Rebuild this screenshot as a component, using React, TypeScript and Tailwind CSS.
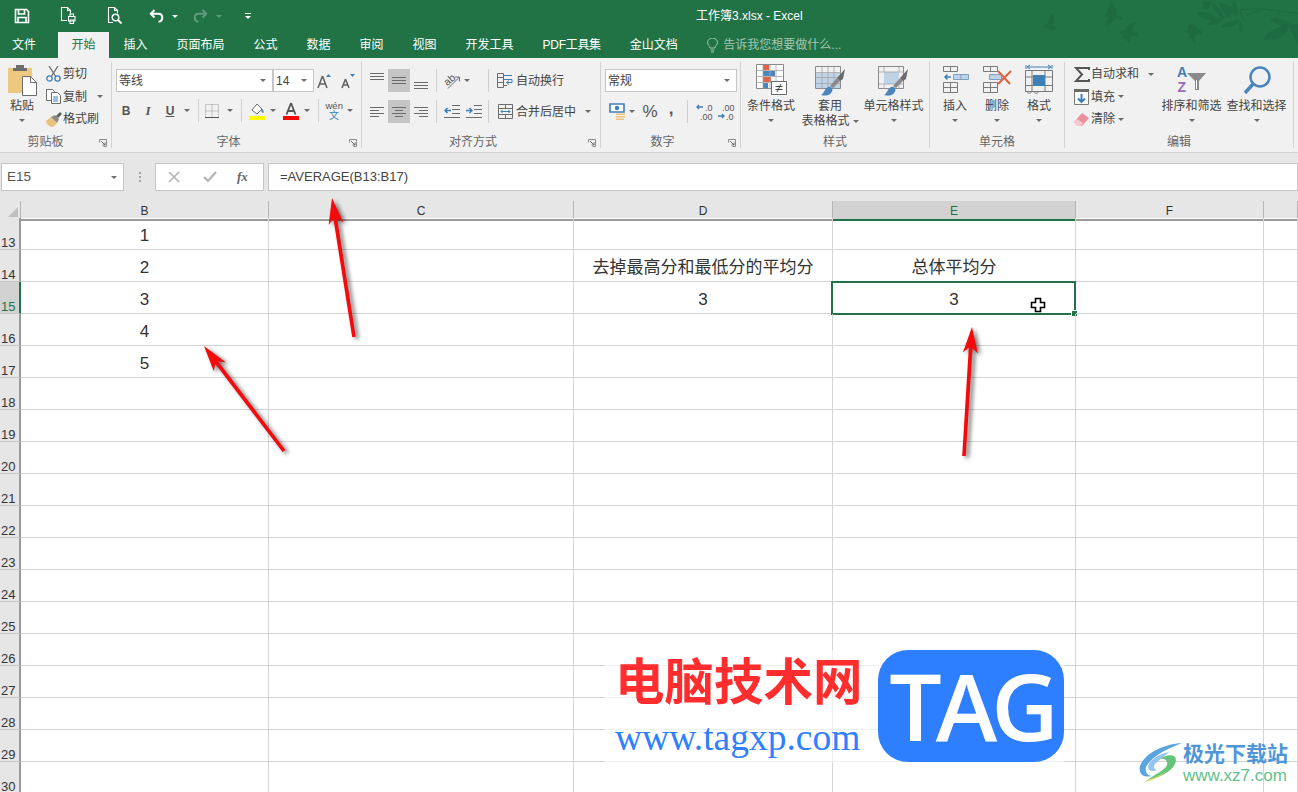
import type { ReactNode } from "react";

const GRAY = "#6b6b6b";
const BLUE = "#3f7fb8";
const RED = "#e0603f";

/* ---------- small bits ---------- */
function Caret({ color = GRAY }: { color?: string }) {
  return (
    <svg width="6" height="3" viewBox="0 0 6 3" className="shrink-0">
      <path d="M0 0h6L3 3z" fill={color} />
    </svg>
  );
}

function Launcher() {
  return (
    <svg width="8" height="8" viewBox="0 0 8 8" className="mr-[4px] shrink-0">
      <path d="M.5 3.5v-3h7v7h-3" fill="none" stroke="#8a8a8a" />
      <path d="M2 2l4 4M6 3.5V6H3.5" fill="none" stroke="#6b6b6b" />
    </svg>
  );
}

function Sep() {
  return <div className="h-[23px] w-px shrink-0 bg-[#cfcfcf]" />;
}

function Slot({ w, active, className = "", children }: { w: string; active?: boolean; className?: string; children?: ReactNode }) {
  return (
    <div className={`flex h-[23px] shrink-0 items-center justify-center ${w} ${active ? "bg-[#c5c5c5]" : ""} ${className}`}>
      {children}
    </div>
  );
}

function Combo({ w, text }: { w: string; text: string }) {
  return (
    <div className={`flex h-[23px] shrink-0 items-center justify-between border border-[#c6c6c6] bg-white pr-[6px] pl-[2px] text-[12px] text-[#444] ${w}`}>
      <span>{text}</span>
      <Caret />
    </div>
  );
}

function Group({ w, label, launcher, labelClass = "", children }: { w: string; label: string; launcher?: boolean; labelClass?: string; children: ReactNode }) {
  return (
    <div className={`flex h-[86px] shrink-0 flex-col border-r border-[#d2d2d2] ${w}`}>
      <div className="h-[71px] shrink-0">{children}</div>
      <div className="mt-[2px] flex h-[15px] shrink-0 items-center text-[12px] leading-[15px] text-[#666]">
        <span className={`flex-1 text-center ${labelClass}`}>{label}</span>
        {launcher && <Launcher />}
      </div>
    </div>
  );
}

function BigButton({ w, icon, lines, inlineCaret }: { w: string; icon: ReactNode; lines: string[]; inlineCaret?: boolean }) {
  return (
    <div className={`flex shrink-0 flex-col items-center text-[12px] leading-[15px] whitespace-nowrap text-[#444] ${w}`}>
      <div className="flex h-[37px] items-end justify-center pb-[3px]">{icon}</div>
      {lines.map((line, i) => (
        <div key={i} className="flex h-[15px] items-center gap-[3px]">
          {line}
          {inlineCaret && i === lines.length - 1 && <Caret />}
        </div>
      ))}
      {!inlineCaret && (
        <div className="flex h-[13px] items-center">
          <Caret />
        </div>
      )}
    </div>
  );
}

function SmallRow({ icon, text, caret }: { icon: ReactNode; text: string; caret?: string }) {
  return (
    <div className="flex h-[22.5px] items-center text-[12px] whitespace-nowrap text-[#444]">
      <div className="flex w-[19px] shrink-0 justify-center">{icon}</div>
      <span>{text}</span>
      {caret && <span className={`flex ${caret}`}><Caret /></span>}
    </div>
  );
}

/* ---------- title bar icons ---------- */
function SaveIcon() {
  return (
    <svg width="16" height="16" viewBox="0 0 16 16" fill="none" stroke="#fff" strokeWidth="1.6">
      <path d="M1.5 1.5h11l2 2v11h-13z" />
      <path d="M4.5 2v4h6V2M4 14.5v-5h8v5" />
    </svg>
  );
}
function PrintIcon() {
  return (
    <svg width="17" height="18" viewBox="0 0 17 18" fill="none" stroke="#fff" strokeWidth="1.1">
      <path d="M7 13.5H1.5v-13h6l3 3v3" />
      <path d="M7.5 .5v3h3" />
      <path d="M8.5 9.5h6.500v4.500H8.500z" fill="#217346" />
      <path d="M10 9.5V7h3.500v2.500M10 13h3.500v3.500H10z" />
    </svg>
  );
}
function PreviewIcon() {
  return (
    <svg width="16" height="18" viewBox="0 0 16 18" fill="none" stroke="#fff" strokeWidth="1.1">
      <path d="M6 15.5H1.5V.5h6l3 3v3" />
      <path d="M7.5 .5v3h3" />
      <circle cx="8.5" cy="10.5" r="3.3" strokeWidth="1.4" />
      <path d="M11 13l3.500 3.500" strokeWidth="1.8" />
    </svg>
  );
}
function UndoIcon({ color }: { color: string }) {
  return (
    <svg width="16" height="14" viewBox="0 0 16 14" fill="none" stroke={color} strokeWidth="2">
      <path d="M5.5 1L1.8 4.800l3.700 3.700" />
      <path d="M2.5 4.800h7c5 0 5 7.500 0 8" />
    </svg>
  );
}

function Decor() {
  return (
    <svg width="258" height="50" viewBox="0 0 774 150" className="absolute top-0 right-0" fill="#1e6a41">
      <path d="M40 40C28 48 25 60 22 72L5 76l17 8 13 6 17-2-4-6-8-4c2-13 4-26 0-38z" />
      <path d="M215 8c-10 7-10 27-20 37l-5 3 15 2-10 28c13-3 27-16 33-23l22 3-5-8-15-2c0-18-5-33-15-40z" />
      <path d="M288 68c-18 2-30 10-33 22l-20 6 15 6-2 10 24 20c-2-12-2-20 3-26l20 4-1-12-17-3c0-10 4-20 11-27z" />
      <path d="M455 70c-10 2-12 12-10 20l-15 5 18 5c2 10 10 25 20 33-6-15-3-23 2-31h16l-2-14-14-3c-2-7-8-13-15-15z" />
      <path d="M600 30c50-8 100 0 174 10M600 30l10 30M665 30l-45 15M720 34l-8 18" fill="none" stroke="#1e6a41" strokeWidth="4" />
      <path d="M467 38c23-6 48 0 63 22-25 2-50-5-63-22zM490 5l25-3c-5 13-10 23-20 28-5-8-7-18-5-25zM515 8c15 7 35 27 35 47-15-10-32-27-35-47zM535 8c25 2 40 12 45 22-5 15-15 20-20 22-10-17-20-32-25-44zM580 0c15 15 17 35 10 48-12-8-18-23-10-48zM500 75c20-20 40-25 55-23-10 16-30 26-55 23zM542 80c18-15 43-20 58-18-10 16-35 23-58 18zM600 62c10 13 12 28 4 38-7-10-9-25-4-38zM670 118c10-23 45-40 78-43-3 25-33 50-78 43zM690 55c25-3 55 7 72 25-27 2-57-5-72-25zM750 78l24-8v55c-12-15-22-30-24-47z" />
    </svg>
  );
}

/* ---------- clipboard icons ---------- */
function PasteIcon() {
  return (
    <svg width="29" height="31" viewBox="0 0 29 31">
      <path d="M0 3h24v25H0z" fill="#edc87e" />
      <path d="M8 3h8V0h-8zM5 3h14v3H5z" fill="#6d6d6d" />
      <path d="M14.5 11.5h8l6 6v13h-14z" fill="#fff" stroke="#6d6d6d" />
      <path d="M22.5 11.5v6h6" fill="none" stroke="#6d6d6d" />
    </svg>
  );
}
function CutIcon() {
  return (
    <svg width="15" height="16" viewBox="0 0 15 16" fill="none">
      <path d="M3 0l7 11M12 0L5 11" stroke="#6d6d6d" strokeWidth="1.3" />
      <circle cx="3.5" cy="12.5" r="2.6" stroke={BLUE} strokeWidth="1.3" />
      <circle cx="11.5" cy="12.5" r="2.6" stroke={BLUE} strokeWidth="1.3" />
    </svg>
  );
}
function CopyIcon() {
  return (
    <svg width="15" height="15" viewBox="0 0 15 15" fill="#fff" stroke="#6d6d6d">
      <path d="M.5.5h6l2 2v9H.5z" />
      <path d="M5.5 3.5h6l3 3v8h-9z" />
      <path d="M7 8h5M7 10h5M7 12h5" stroke={BLUE} />
    </svg>
  );
}
function BrushIcon() {
  return (
    <svg width="16" height="15" viewBox="0 0 16 15">
      <path d="M0 9l5-4 6 6-4 4C4 15 1 13 0 9z" fill="#e9c27c" />
      <path d="M5 5l4-2 4 4-2 4z" fill="#8a8a8a" />
      <path d="M10 4l4-4 2 2-4 4z" fill="#5f5f5f" />
    </svg>
  );
}

/* ---------- font icons ---------- */
function BorderIcon() {
  return (
    <svg width="14" height="14" viewBox="0 0 14 14" fill="none" stroke="#9a9a9a" strokeDasharray="1 1">
      <path d="M.5.5h13v13H.5zM7 .5v13M.5 7h13" />
      <path d="M0 13.5h14" stroke="#555" strokeDasharray="none" />
    </svg>
  );
}
function FillIcon() {
  return (
    <svg width="16" height="18" viewBox="0 0 16 18">
      <path d="M3 8l5-6 5 5-5 5z" fill="#fff" stroke="#6d6d6d" />
      <path d="M12 6c2 1 3 3 2.5 5-1.500 0-2.500-2-2.500-5z" fill={BLUE} />
      <path d="M0 14h16v4H0z" fill="#ffff00" />
    </svg>
  );
}
function FontColorIcon() {
  return (
    <svg width="16" height="18" viewBox="0 0 16 18">
      <path d="M8 1L3.5 12.5M8 1l4.500 11.500M5 9h6" stroke="#555" strokeWidth="1.8" fill="none" />
      <path d="M0 14h16v4H0z" fill="#ff0000" />
    </svg>
  );
}
function GrowIcon({ up }: { up: boolean }) {
  return (
    <svg width="17" height="16" viewBox="0 0 17 16">
      <path d={up ? "M5.5 3L1 15M5.5 3L10 15M2.5 11h6" : "M5.5 6L2 15M5.5 6L9 15M3.3 12h4.500"} stroke="#5f5f5f" strokeWidth="1.5" fill="none" />
      <path d={up ? "M9 4l2.500-3L14 4z" : "M10 1h5l-2.500 3z"} fill={BLUE} />
    </svg>
  );
}
function WenIcon() {
  return (
    <svg width="20" height="24" viewBox="0 0 20 24" fontFamily="Liberation Sans, sans-serif">
      <text x="1.500" y="10" fontSize="9.5" fill="#555">wén</text>
      <text x="5" y="20" fontSize="10" fill={BLUE} fontFamily="Noto Sans CJK SC, sans-serif">文</text>
    </svg>
  );
}

/* ---------- alignment icons ---------- */
function Lines({ ys, anchor = "full" }: { ys: number[]; anchor?: "full" | "left" | "center" | "right" }) {
  return (
    <svg width="14" height="16" viewBox="0 0 14 16" stroke="#6b6b6b">
      {ys.map((y, i) => {
        const short = anchor !== "full" && i % 2 === 1;
        const x1 = short ? (anchor === "left" ? 0 : anchor === "center" ? 3 : 5) : 0;
        const x2 = short ? (anchor === "left" ? 9 : anchor === "center" ? 11 : 14) : 14;
        return <path key={i} d={`M${x1} ${y + 0.5}H${x2}`} />;
      })}
    </svg>
  );
}
function OrientIcon() {
  return (
    <svg width="17" height="16" viewBox="0 0 17 16" fontFamily="Liberation Sans, sans-serif">
      <text x="0" y="10" fontSize="10.5" fill="#555" transform="rotate(-40 6 7)">ab</text>
      <path d="M4 15.500L15 4.500M11 4h4.500v4.500" fill="none" stroke="#6b6b6b" />
    </svg>
  );
}
function WrapIcon() {
  return (
    <svg width="16" height="15" viewBox="0 0 16 15" fill="none">
      <path d="M.5.5h6v14h-6z" stroke="#6b6b6b" />
      <path d="M.5 4.5H7M.5 9.5H7" stroke="#6b6b6b" />
      <path d="M7 2.5h8M7 6.5h8v3H10" stroke={BLUE} />
      <path d="M12 7.5l-2.500 2 2.500 2" stroke={BLUE} />
      <path d="M7 12.5h3" stroke="#6b6b6b" />
    </svg>
  );
}
function MergeIcon() {
  return (
    <svg width="15" height="15" viewBox="0 0 15 15" fill="none" stroke="#6b6b6b">
      <path d="M.5.5h14v14H.5zM.5 4.5h14M.5 10.5h14M7.500.5v4M7.500 10.5v4" />
      <path d="M3 7.5h9M4.500 6L3 7.500 4.500 9M10.500 6L12 7.500 10.500 9" stroke={BLUE} />
    </svg>
  );
}
function IndentIcon({ out }: { out: boolean }) {
  return (
    <svg width="16" height="13" viewBox="0 0 16 13" fill="none">
      <path d="M8 .5h8M8 4.500h8M8 8.500h8M0 12.500h16" stroke="#6b6b6b" />
      <path d={out ? "M7 5.500H1M3.500 3L1 5.500 3.500 8" : "M0 5.500h6M3.500 3L6 5.500 3.500 8"} stroke={BLUE} strokeWidth="1.5" />
    </svg>
  );
}

/* ---------- number icons ---------- */
function MoneyIcon() {
  return (
    <svg width="17" height="17" viewBox="0 0 17 17">
      <path d="M1 1h14v8H1z" fill="#fff" stroke={BLUE} strokeWidth="1.6" />
      <circle cx="8" cy="5" r="2.2" fill={BLUE} />
      <path d="M7 10.5h9v1.500H7zM7 13h9v1.500H7zM7 15.500h8V17H7z" fill="#e9c27c" />
    </svg>
  );
}
function DecimalIcon({ inc }: { inc: boolean }) {
  return (
    <svg width="18" height="18" viewBox="0 0 18 18" fontFamily="Liberation Sans, sans-serif" fontSize="9" fill="#555">
      <text x={inc ? 9 : 5} y="7.500">{inc ? ".0" : ".00"}</text>
      <text x={inc ? 4 : 9} y="17">{inc ? ".00" : ".0"}</text>
      <path d={inc ? "M7 4H1M3 2L1 4l2 2" : "M1 13h6M5 11l2 2-2 2"} fill="none" stroke={BLUE} strokeWidth="1.3" />
    </svg>
  );
}

/* ---------- style / cell icons ---------- */
function CondIcon() {
  return (
    <svg width="31" height="32" viewBox="0 0 31 32">
      <path d="M.5.5h27v24H.5z" fill="#fff" stroke="#8a8a8a" />
      <path d="M7 1h6v5H7zM7 13h8v5H7z" fill="#df6445" />
      <path d="M7 7h12v5H7zM7 19h5v5H7z" fill="#4a86bd" />
      <path d="M7 1v24M14 1v24M20 1v24M1 6.5h26M1 12.5h26M1 18.5h26" stroke="#a5a5a5" strokeWidth=".8" fill="none" />
      <path d="M15.500 17.500h15v13h-15z" fill="#fff" stroke="#6b6b6b" />
      <path d="M19.500 22.500h7M19.500 25.500h7M25 20l-4 8" stroke="#444" fill="none" />
    </svg>
  );
}
function TableBrushIcon({ wide }: { wide: boolean }) {
  return (
    <svg width="31" height="30" viewBox="0 0 31 30">
      {wide ? <path d="M1 7h25v16H1z" fill="#bfd3e8" /> : <path d="M6 6h15v12H6z" fill="#bfd3e8" />}
      <path d="M.5.500h25v22H.5z" fill="none" stroke="#8a8a8a" />
      <path d={wide ? "M7 1v22M13 1v22M19 1v22M1 6.500h25M1 11.500h25M1 17.500h25" : "M6 1v5M6 18v5M21 1v5M21 18v5M1 6h25M1 18h25"} stroke="#a5a5a5" strokeWidth=".8" fill="none" />
      <path d="M6 29c3-1 3-6 7-8 4-1 6 3 3 6-2 3-7 3-10 2z" fill="#4a86bd" />
      <path d="M15 20l7-8 3 3-7 7z" fill="#8a8a8a" />
      <path d="M22 12l8-9-2 10-3 2z" fill="#6b6b6b" />
    </svg>
  );
}
function InsertIcon() {
  return (
    <svg width="27" height="30" viewBox="0 0 27 30" fill="none" stroke="#7a7a7a">
      <path d="M1.500.5h14v5h-14zM8.500.5v5" />
      <path d="M1.500 16.500h14v10h-14zM8.500 16.500v10M1.500 21.500h14" />
      <path d="M11.500 8.500h15v5h-15zM19 8.500v5" fill="#bfd3e8" stroke="#7f9fc0" />
      <path d="M3 11h6M5.500 8.500L3 11l2.500 2.500" stroke={BLUE} strokeWidth="1.5" />
    </svg>
  );
}
function DeleteIcon() {
  return (
    <svg width="30" height="30" viewBox="0 0 30 30" fill="none" stroke="#7a7a7a">
      <path d="M1.500.5h14v5h-14zM8.500.5v5" />
      <path d="M1.500 16.500h14v10h-14zM8.500 16.500v10M1.500 21.500h14" />
      <path d="M7.500 8.500h12v5h-12z" fill="#bfd3e8" stroke="#7f9fc0" />
      <path d="M16 5l12 13M29 5L16 18" stroke={RED} strokeWidth="2" />
    </svg>
  );
}
function FormatIcon() {
  return (
    <svg width="28" height="32" viewBox="0 0 28 32" fill="none" stroke="#7a7a7a">
      <path d="M1 1v4M27 1v4M2 3h24M5 1L2 3l3 2M23 1l3 2-3 2" stroke={BLUE} />
      <path d="M.5 6.500h27v21H.5zM7 6.500v21M20 6.500v21M.5 13h27M.5 21.500h27" />
      <path d="M8 11h12v11H8z" fill="#3f7fb8" stroke="none" />
      <path d="M1 27c2 3 5 3 6 0M8 27c2 3 5 3 6 0" />
    </svg>
  );
}

/* ---------- editing icons ---------- */
function SumIcon() {
  return (
    <svg width="16" height="15" viewBox="0 0 16 15" fill="none" stroke="#555" strokeWidth="2">
      <path d="M15 3V1H2l6 6.5L2 14h13v-2" />
    </svg>
  );
}
function FillDownIcon() {
  return (
    <svg width="15" height="16" viewBox="0 0 15 16">
      <path d="M.5.500h14v15H.5z" fill="#fff" stroke="#7a7a7a" />
      <path d="M0 0h15v3H0z" fill="#6b6b6b" />
      <path d="M7.500 5v8M4 9.500l3.500 3.500L11 9.500" fill="none" stroke={BLUE} strokeWidth="2" />
    </svg>
  );
}
function EraserIcon() {
  return (
    <svg width="15" height="13" viewBox="0 0 15 13">
      <path d="M0 9l8-9 7 5-7 8H3z" fill="#ec8fa0" />
      <path d="M0 9l3-3 6 4-2 3H3z" fill="#f7c9d1" />
    </svg>
  );
}
function SortIcon() {
  return (
    <svg width="32" height="33" viewBox="0 0 32 33" fontFamily="Liberation Sans, sans-serif" fontWeight="700" fontSize="14">
      <text x="1" y="14" fill={BLUE}>A</text>
      <text x="1.500" y="29" fill="#9a6bb8">Z</text>
      <path d="M11 10h19l-7 8v9h-4v-9z" fill="#8a8a8a" />
      <path d="M20.500 17v9" stroke="#fff" />
    </svg>
  );
}
function FindIcon() {
  return (
    <svg width="28" height="30" viewBox="0 0 28 30" fill="none" stroke="#4a86bd">
      <circle cx="17" cy="11" r="9.5" strokeWidth="2.5" />
      <path d="M10 18L2 27" strokeWidth="3.5" />
    </svg>
  );
}

/* ---------- arrows on top of the sheet ---------- */
function Arrow({ from, to }: { from: [number, number]; to: [number, number] }) {
  const dx = to[0] - from[0];
  const dy = to[1] - from[1];
  const len = Math.hypot(dx, dy);
  const ux = dx / len;
  const uy = dy / len;
  const at = (back: number, side: number) => `${to[0] - ux * back - uy * side},${to[1] - uy * back + ux * side}`;
  const points = [
    at(0, 0),
    at(26, 7.5),
    at(21, 1.9),
    `${from[0] - uy * 1.8},${from[1] + ux * 1.8}`,
    `${from[0] + uy * 1.8},${from[1] - ux * 1.8}`,
    at(21, -1.9),
    at(26, -7.5),
  ].join(" ");
  return <polygon points={points} fill="#f40a0a" />;
}

/* ---------- sheet data ---------- */
const columns = ["B", "C", "D", "E", "F", ""];
const rows = Array.from({ length: 18 }, (_, i) => 13 + i);
const cells: Record<string, string> = {
  B13: "1",
  B14: "2",
  B15: "3",
  B16: "4",
  B17: "5",
  D14: "去掉最高分和最低分的平均分",
  E14: "总体平均分",
  D15: "3",
  E15: "3",
};
const gridCols = "grid-cols-[21px_248px_305px_259px_243px_188px_34px]";

export default function App() {
  return (
    <div className="relative h-[792px] w-[1298px] overflow-hidden bg-white font-['Liberation_Sans','Noto_Sans_CJK_SC',sans-serif]">
      {/* Title bar */}
      <div className="relative flex h-[32px] items-center bg-[#217346]">
        <Decor />
        <div className="ml-[14px]"><SaveIcon /></div>
        <div className="ml-[30px]"><PrintIcon /></div>
        <div className="ml-[30px]"><PreviewIcon /></div>
        <div className="ml-[26px]"><UndoIcon color="#fff" /></div>
        <div className="ml-[7px] flex"><Caret color="#fff" /></div>
        <div className="ml-[14px] -scale-x-100"><UndoIcon color="#5f9a7c" /></div>
        <div className="ml-[8px] flex"><Caret color="#5f9a7c" /></div>
        <div className="ml-[23px] flex flex-col items-center gap-[2px]">
          <div className="h-px w-[6px] bg-white" />
          <Caret color="#fff" />
        </div>
        <div className="ml-[445px] text-[12px] text-white">工作簿3.xlsx - Excel</div>
      </div>

      {/* Tabs */}
      <div className="flex h-[26px] items-center bg-[#217346] text-[12px] text-white">
        <div className="w-[58px] pl-[12px] leading-[26px]">文件</div>
        <div className="h-[26px] w-[51px] bg-[#f1f1f1] text-center leading-[26px] text-[#217346]">开始</div>
        {["插入", "页面布局", "公式", "数据", "审阅", "视图", "开发工具"].map((tab) => (
          <div key={tab} className="px-[14.5px] leading-[26px]">{tab}</div>
        ))}
        <div className="px-[14.5px] leading-[26px] tracking-[-0.3px]">PDF工具集</div>
        <div className="px-[14.5px] leading-[26px]">金山文档</div>
        <div className="ml-[14px] flex items-center gap-[4px] text-[#a5c7b3]">
          <svg width="13" height="15" viewBox="0 0 13 15" fill="none" stroke="#a5c7b3">
            <path d="M4 10c0-2-2.500-3-2.500-5.500a5 4.500 0 0 1 10 0C11.500 7 9 8 9 10zM4.500 12h4M5 14h3" />
          </svg>
          告诉我您想要做什么...
        </div>
      </div>

      {/* Ribbon */}
      <div className="flex h-[95px] items-start border-b border-[#d2d2d2] bg-[#f1f1f1] pt-[4px]">
        <Group w="w-[112px]" label="剪贴板" launcher labelClass="pr-[8px]">
          <div className="flex">
            <BigButton w="w-[44px]" icon={<PasteIcon />} lines={["粘贴"]} />
            <div className="pt-px">
              <SmallRow icon={<CutIcon />} text="剪切" />
              <SmallRow icon={<CopyIcon />} text="复制" caret="ml-[10px]" />
              <SmallRow icon={<BrushIcon />} text="格式刷" />
            </div>
          </div>
        </Group>

        <Group w="w-[250px]" label="字体" launcher labelClass="pr-[4px]">
          <div className="ml-[4px] flex items-center pt-[7px]">
            <Combo w="w-[157px]" text="等线" />
            <Combo w="w-[41px]" text="14" />
            <Slot w="w-[23px]"><GrowIcon up /></Slot>
            <Slot w="w-[23px]"><GrowIcon up={false} /></Slot>
          </div>
          <div className="mt-[7px] ml-[3px] flex items-center text-[#555]">
            <Slot w="w-[22px]" className="text-[12px] font-bold">B</Slot>
            <Slot w="w-[22px]" className="font-['Liberation_Serif'] text-[13px] font-bold italic">I</Slot>
            <Slot w="w-[22px]" className="text-[12px] font-bold underline">U</Slot>
            <Slot w="w-[12px]"><Caret /></Slot>
            <div className="ml-[5px]"><Sep /></div>
            <Slot w="w-[22px]" className="ml-[2px]"><BorderIcon /></Slot>
            <Slot w="w-[12px]" className="ml-[1px]"><Caret /></Slot>
            <div className="ml-[5px]"><Sep /></div>
            <Slot w="w-[24px]" className="ml-[3px]"><FillIcon /></Slot>
            <Slot w="w-[8px]"><Caret /></Slot>
            <Slot w="w-[24px]" className="ml-[2px]"><FontColorIcon /></Slot>
            <Slot w="w-[8px]"><Caret /></Slot>
            <div className="ml-[7px]"><Sep /></div>
            <Slot w="w-[24px]" className="ml-[3px]"><WenIcon /></Slot>
            <Slot w="w-[8px]"><Caret /></Slot>
          </div>
        </Group>

        <Group w="w-[239px]" label="对齐方式" launcher labelClass="pr-[4px]">
          <div className="ml-[4px] flex items-center pt-[7px] text-[12px] text-[#444]">
            <Slot w="w-[22px]"><Lines ys={[0, 3, 6]} /></Slot>
            <Slot w="w-[22px]" active><Lines ys={[4, 7, 10]} /></Slot>
            <Slot w="w-[22px]"><Lines ys={[9, 12, 15]} /></Slot>
            <div className="ml-[4px]"><Sep /></div>
            <Slot w="w-[22px]" className="ml-[4px]"><OrientIcon /></Slot>
            <Slot w="w-[8px]"><Caret /></Slot>
            <div className="ml-[17px]"><Sep /></div>
            <Slot w="w-[20px]" className="ml-[6px]"><WrapIcon /></Slot>
            <span className="ml-[1px]">自动换行</span>
          </div>
          <div className="mt-[8px] ml-[4px] flex items-center text-[12px] text-[#444]">
            <Slot w="w-[22px]"><Lines ys={[3, 6, 9, 12]} anchor="left" /></Slot>
            <Slot w="w-[22px]" active><Lines ys={[3, 6, 9, 12]} anchor="center" /></Slot>
            <Slot w="w-[22px]"><Lines ys={[3, 6, 9, 12]} anchor="right" /></Slot>
            <div className="ml-[4px]"><Sep /></div>
            <Slot w="w-[22px]" className="ml-[4px]"><IndentIcon out /></Slot>
            <Slot w="w-[22px]"><IndentIcon out={false} /></Slot>
            <div className="ml-[3px]"><Sep /></div>
            <Slot w="w-[20px]" className="ml-[6px]"><MergeIcon /></Slot>
            <span className="ml-[1px]">合并后居中</span>
            <span className="ml-[9px] flex"><Caret /></span>
          </div>
        </Group>

        <Group w="w-[140px]" label="数字" launcher labelClass="pr-[4px]">
          <div className="ml-[4px] flex pt-[7px]">
            <Combo w="w-[132px]" text="常规" />
          </div>
          <div className="mt-[8px] ml-[5px] flex items-center text-[#555]">
            <Slot w="w-[22px]"><MoneyIcon /></Slot>
            <Slot w="w-[8px]"><Caret /></Slot>
            <Slot w="w-[22px]" className="ml-[3px] text-[17px]">%</Slot>
            <Slot w="w-[20px]" className="pb-[6px] text-[17px] font-bold">,</Slot>
            <div className="ml-[6px]"><Sep /></div>
            <Slot w="w-[22px]" className="ml-[6px]"><DecimalIcon inc /></Slot>
            <Slot w="w-[20px]"><DecimalIcon inc={false} /></Slot>
          </div>
        </Group>

        <Group w="w-[189px]" label="样式">
          <div className="flex">
            <BigButton w="w-[60px]" icon={<CondIcon />} lines={["条件格式"]} />
            <BigButton w="w-[58px]" icon={<TableBrushIcon wide />} lines={["套用", "表格格式"]} inlineCaret />
            <BigButton w="w-[69px]" icon={<TableBrushIcon wide={false} />} lines={["单元格样式"]} />
          </div>
        </Group>

        <Group w="w-[135px]" label="单元格">
          <div className="ml-[4px] flex">
            <BigButton w="w-[42px]" icon={<InsertIcon />} lines={["插入"]} />
            <BigButton w="w-[42px]" icon={<DeleteIcon />} lines={["删除"]} />
            <BigButton w="w-[42px]" icon={<FormatIcon />} lines={["格式"]} />
          </div>
        </Group>

        <Group w="w-[229px]" label="编辑">
          <div className="flex">
            <div className="w-[94px] pt-px pl-[7px]">
              <SmallRow icon={<SumIcon />} text="自动求和" caret="ml-[9px]" />
              <SmallRow icon={<FillDownIcon />} text="填充" caret="ml-[3px]" />
              <SmallRow icon={<EraserIcon />} text="清除" caret="ml-[3px]" />
            </div>
            <BigButton w="w-[65px]" icon={<SortIcon />} lines={["排序和筛选"]} />
            <BigButton w="w-[65px]" icon={<FindIcon />} lines={["查找和选择"]} />
          </div>
        </Group>
      </div>

      {/* Formula bar */}
      <div className="flex h-[48px] gap-[4px] bg-[#e6e6e6] pt-[10px] pl-px text-[#444]">
        <div className="flex h-[28px] w-[123px] items-center justify-between border border-[#c6c6c6] bg-white pr-[6px] pl-[5px] text-[13.5px] text-[#555]">
          E15
          <Caret />
        </div>
        <div className="flex h-[28px] w-[23px] flex-col items-center justify-center gap-[2px]">
          <div className="size-[2px] bg-[#a5a5a5]" />
          <div className="size-[2px] bg-[#a5a5a5]" />
          <div className="size-[2px] bg-[#a5a5a5]" />
        </div>
        <div className="flex h-[28px] w-[109px] items-center border border-[#c6c6c6] bg-white pl-[12px]">
          <svg width="12" height="12" viewBox="0 0 12 12" stroke="#b5b5b5" strokeWidth="1.7" fill="none">
            <path d="M1 1l10 10M11 1L1 11" />
          </svg>
          <svg width="14" height="12" viewBox="0 0 14 12" stroke="#b5b5b5" strokeWidth="2.2" fill="none" className="ml-[23px]">
            <path d="M1 6l4 4 8-9" />
          </svg>
          <span className="ml-[20px] font-['Liberation_Serif'] text-[13px] font-bold text-[#666] italic">fx</span>
        </div>
        <div className="flex h-[28px] flex-1 items-center border border-[#c6c6c6] bg-white pl-[11px] text-[13px]">
          =AVERAGE(B13:B17)
        </div>
      </div>

      {/* Column headers */}
      <div className={`grid h-[17px] ${gridCols} bg-[#e6e6e6] text-[12px] leading-[15px] text-[#333]`}>
        <div className="flex items-end justify-end border-r border-b-2 border-r-[#b5b5b5] border-b-[#9a9a9a] pr-[2px] pb-[2px]">
          <svg width="10" height="10" viewBox="0 0 10 10"><path d="M10 0v10H0z" fill="#c0c0c0" /></svg>
        </div>
        {columns.map((col) => (
          <div
            key={col}
            className={
              col === "E"
                ? "border-r border-b-2 border-r-[#b5b5b5] border-b-[#217346] bg-[#d2d2d2] pt-[3px] text-center text-[#217346]"
                : "border-r border-b-2 border-r-[#b5b5b5] border-b-[#9a9a9a] pt-[3px] text-center"
            }
          >
            {col}
          </div>
        ))}
      </div>

      {/* Sheet */}
      {rows.map((row) => (
        <div key={row} className={`grid h-[32px] ${gridCols}`}>
          <div
            className={
              row === 15
                ? "flex items-end border-r-2 border-b border-r-[#217346] border-b-[#c6c6c6] bg-[#d2d2d2] pl-[1px] text-[13px] leading-[13px] text-[#217346]"
                : "flex items-end border-r-2 border-b border-r-[#9a9a9a] border-b-[#c6c6c6] bg-[#e6e6e6] pl-[1px] text-[13px] leading-[13px] text-[#333]"
            }
          >
            {row}
          </div>
          {columns.map((col) => {
            const key = col + row;
            return (
              <div key={col} className="relative flex items-center justify-center border-r border-b border-[#d4d4d4] pt-[4px] text-[17px] whitespace-nowrap text-[#333]">
                {cells[key]}
                {key === "E15" && (
                  <>
                    <div className="absolute -top-px -right-px -bottom-[2px] -left-[2px] border-2 border-[#217346]" />
                    <div className="absolute -right-[2px] -bottom-[3px] size-[5px] bg-[#217346] outline outline-white" />
                    <svg width="16" height="16" viewBox="0 0 16 16" className="absolute top-[15px] left-[197px]">
                      <path d="M5.5 1.5h5v4h4v5h-4v4h-5v-4h-4v-5h4z" fill="#fff" stroke="#000" strokeWidth="1.6" />
                    </svg>
                  </>
                )}
              </div>
            );
          })}
        </div>
      ))}

      {/* Annotation arrows */}
      <svg width="1298" height="792" viewBox="0 0 1298 792" className="pointer-events-none absolute top-0 left-0 drop-shadow-[3px_2px_2px_rgba(0,0,0,0.55)]">
        <Arrow from={[284, 451]} to={[204, 346]} />
        <Arrow from={[354, 337]} to={[332, 198]} />
        <Arrow from={[964, 456]} to={[972, 327]} />
      </svg>

      {/* Watermark */}
      <div className="absolute top-[650px] left-[605px] flex items-start gap-[16px] bg-white/60 pl-[10px]">
        <div className="flex w-[247px] flex-col">
          <div className="text-[49.5px] leading-[66px] font-bold whitespace-nowrap text-[#ff2d2d]">电脑技术网</div>
          <div className="font-['Liberation_Serif'] text-[37.5px] leading-[44px] whitespace-nowrap text-[#2f80ff]">www.tagxp.com</div>
        </div>
        <div className="flex h-[112px] w-[186px] items-center justify-center rounded-[30px] bg-[#2e7fff] font-['Open_Sans'] text-[93px] font-semibold tracking-[-6px] text-white">
          TAG
        </div>
      </div>
      <div className="absolute top-[742px] left-[1139px] flex items-start gap-[1px]">
        <svg width="43" height="42" viewBox="0 0 43 42">
          <path d="M43 1C25 2 6 11 1 24c-2 8 4 12 11 10-6-2-7-8-3-12C15 13 30 6 43 1z" fill="#5aa5e0" />
          <path d="M30 10C20 12 10 18 9 25c0 4 5 5 9 3-4-1-4-4-1-7 3-3 9-7 13-11z" fill="#93c4ec" />
          <path d="M36 15c4 7-6 19-28 23 12-8 22-12 20-18-1-3-4-4-7-3 5-4 12-5 15-2z" fill="#66c47a" />
          <path d="M8 38c8-2 14-5 20-10-6 7-14 10-22 12z" fill="#d9d96a" />
        </svg>
        <div className="flex flex-col">
          <div className="text-[21px] leading-[24px] font-bold whitespace-nowrap text-[#4f96d8]">极光下载站</div>
          <div className="mt-[1px] text-[17px] leading-[18px] whitespace-nowrap text-[#62c28a]">www.xz7.com</div>
        </div>
      </div>
    </div>
  );
}
